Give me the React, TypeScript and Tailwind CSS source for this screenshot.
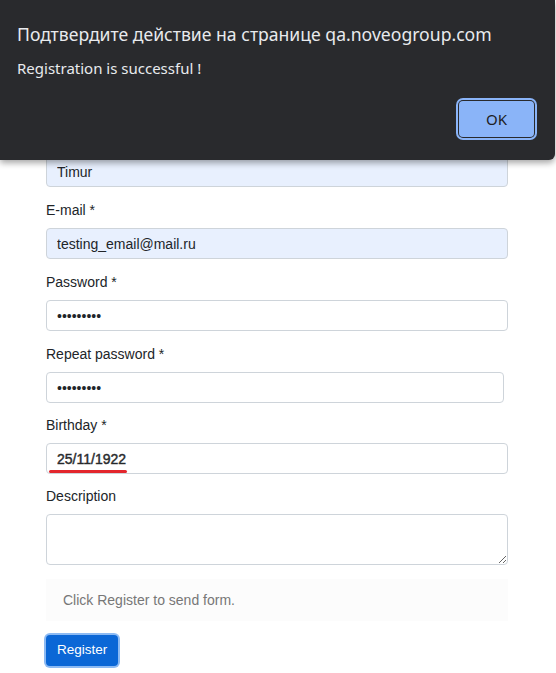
import React from 'react';

const font = { fontFamily: '"Liberation Sans", Arial, sans-serif' };

const Label = ({ text }: { text: string }) => (
  <div className="h-5 mb-2 text-[14px] leading-5 text-[#212529]">{text}</div>
);

export default function App() {
  const inputBase =
    'block h-[31px] border border-[#ced4da] rounded-[4px] px-[10px] text-[14px] text-[#212529] outline-none';

  return (
    <div className="relative w-[556px] h-[673px] bg-white overflow-hidden" style={font}>
      {/* the form behind the browser dialog */}
      <div className="pt-[128px] pl-[46px]">
        <Label text="Name *" />
        <input readOnly value="Timur" className={`${inputBase} w-[462px] bg-[#e8f0fe] mb-[13px]`} />

        <Label text="E-mail *" />
        <input readOnly value="testing_email@mail.ru" className={`${inputBase} w-[462px] bg-[#e8f0fe] mb-[13px]`} />

        <Label text="Password *" />
        <input readOnly type="password" value="123456789" className={`${inputBase} w-[462px] bg-white mb-[13px] text-[12px] text-[#555]`} />

        <Label text="Repeat password *" />
        <input readOnly type="password" value="123456789" className={`${inputBase} w-[458px] bg-white mb-[12px] text-[12px] text-[#555]`} />

        <Label text="Birthday *" />
        <div className="relative w-[462px] mb-[12px]">
          <input readOnly value="25/11/1922" className={`${inputBase} w-[462px] bg-white text-[#333] [-webkit-text-stroke:0.45px_#333]`} />
          <div className="absolute left-[3px] top-[27px] w-[78px] h-[3px] rounded-full bg-[#e3262d]" />
        </div>

        <Label text="Description" />
        <textarea readOnly className="block w-[462px] h-[51px] border border-[#ced4da] rounded-[4px] px-[10px] text-[14px] outline-none mb-[14px]" />

        <div className="w-[462px] h-[42px] bg-[#fcfcfc] flex items-center pl-[17px] text-[14px] text-[#777] mb-[14px]">
          Click Register to send form.
        </div>

        <button className="h-[31px] px-[11px] rounded-[4px] bg-[#0b67d6] text-white text-[13.5px] ring-2 ring-[#8cbaf3]">
          Register
        </button>
      </div>

      {/* browser confirm dialog */}
      <div
        className="absolute left-0 top-0 w-[555px] h-[160px] bg-[#292a2d] rounded-br-[6px] shadow-[0_3px_6px_rgba(0,0,0,0.35)]"
        style={{ fontFamily: '"Noto Sans", "Open Sans", sans-serif' }}
      >
        <div className="pt-[20px] pl-[17px] text-[17.6px] leading-[28px] text-[#e8eaed]">
          Подтвердите действие на странице qa.noveogroup.com
        </div>
        <div className="pt-[8px] pl-[17px] text-[15px] leading-[24px] text-[#e8eaed]">
          Registration is successful !
        </div>
        <div className="flex justify-end pr-[21px] pt-[21px]">
          <button className="w-[75px] h-[36px] rounded-[4px] bg-[#8ab4f8] text-[#202124] text-[15px] ring-2 ring-[#8ab4f8] ring-offset-1 ring-offset-[#292a2d]">
            OK
          </button>
        </div>
      </div>
    </div>
  );
}
